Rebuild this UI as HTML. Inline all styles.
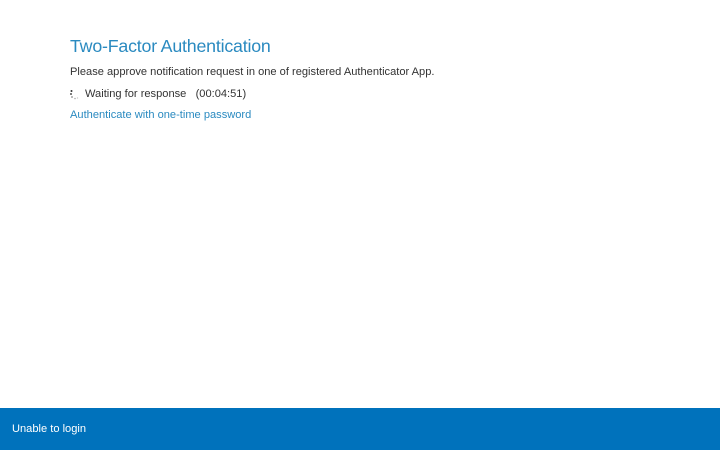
<!DOCTYPE html>
<html><head><style>
body{margin:0;width:720px;height:450px;position:relative;background:#fff;font-family:"Liberation Sans",sans-serif;overflow:hidden}
.h{position:absolute;left:70px;top:36px;font-size:17.8px;color:#2a8ac0;letter-spacing:-0.2px}
.p{position:absolute;left:70px;top:66px;font-size:11.1px;color:#333}
.w{position:absolute;left:85px;top:88px;font-size:11.1px;color:#333}
.sp{position:absolute;left:70px;top:89px;width:9px;height:11px}
.a{position:absolute;left:70px;top:109px;font-size:11.1px;color:#2a8ac0}
.f{position:absolute;left:0;top:408px;width:720px;height:42px;background:#0072bc}
.f span{position:absolute;left:12px;top:15px;color:#fff;font-size:11.1px}
</style></head><body>
<div class="h">Two-Factor Authentication</div>
<div class="p">Please approve notification request in one of registered Authenticator App.</div>
<svg class="sp" viewBox="0 0 9 11"><circle cx="1.5" cy="2" r="1" fill="#333"/><circle cx="1" cy="5" r="1" fill="#555"/><circle cx="2" cy="8" r="0.9" fill="#888"/><circle cx="5" cy="9.5" r="0.8" fill="#aaa"/><circle cx="7.5" cy="9" r="0.7" fill="#ccc"/></svg>
<div class="w">Waiting for response&nbsp;&nbsp; (00:04:51)</div>
<div class="a">Authenticate with one-time password</div>
<div class="f"><span>Unable to login</span></div>
</body></html>
